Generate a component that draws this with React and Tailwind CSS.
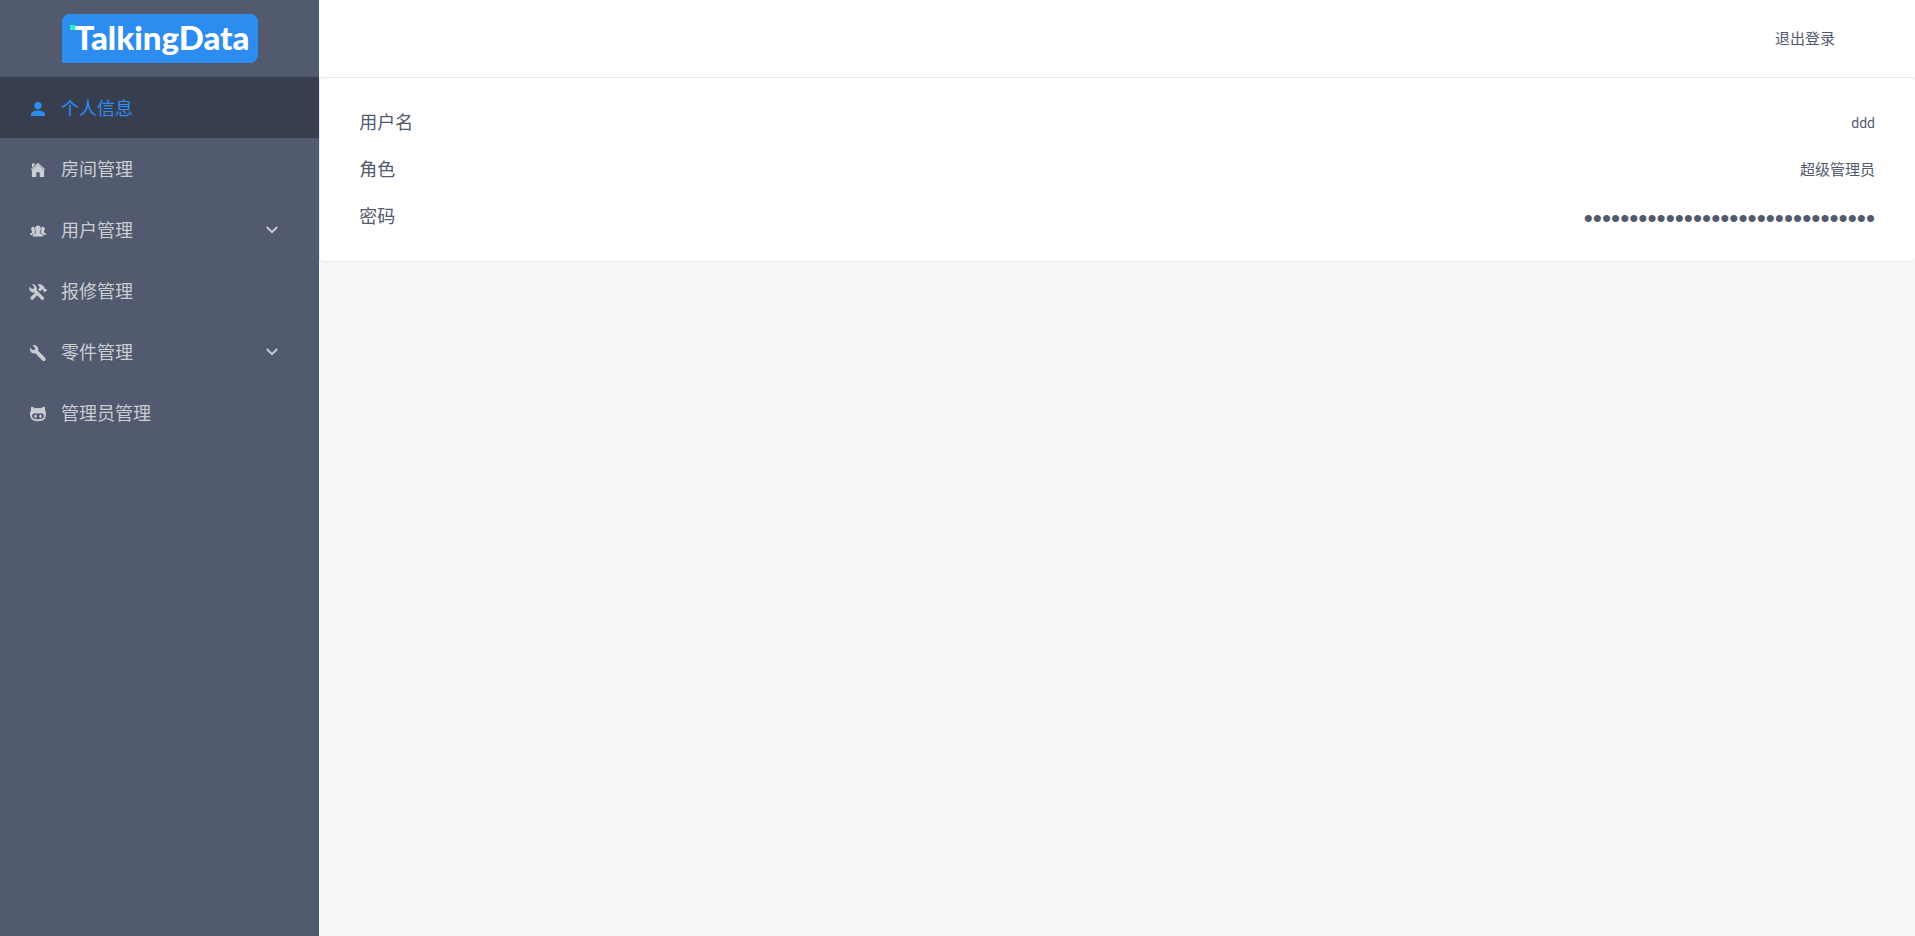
import React, { useState } from 'react';

function PersonIcon() {
  return (
    <svg viewBox="0 0 16 16" className="w-4 h-4 shrink-0" fill="currentColor" aria-hidden="true">
      <circle cx="8" cy="4.6" r="3.7" />
      <path d="M1 15v-1.600C1 10.800 4.600 9.400 8 9.400s7 1.400 7 4V15z" />
    </svg>
  );
}

function HomeIcon() {
  return (
    <svg viewBox="0 0 16 16" className="w-4 h-4 shrink-0" fill="currentColor" aria-hidden="true">
      <path d="M8 .8L.8 7.200l.7.8L8 2.400 14.500 8l.7-.8z" />
      <path d="M2 1.600h2.700v1.500L2 5.400z" />
      <path d="M8 2.800L1.900 8V15h4.400v-4.800h3.400V15h4.400V8z" />
    </svg>
  );
}

function PeopleIcon() {
  return (
    <svg viewBox="0 0 16 16" className="w-4 h-4 shrink-0" fill="currentColor" aria-hidden="true">
      <path d="M8 2.600c1.900 0 3 1.300 2.900 3.200-.1 1.500-.6 2.300-1 3.100-.2.900 0 1.400 1.200 1.800 1.400.4 2.300.9 2.300 2.900H2.600c0-2 .9-2.500 2.300-2.900 1.200-.4 1.400-.9 1.200-1.800-.4-.8-.9-1.600-1-3.100C5 3.900 6.100 2.600 8 2.600z" />
      <path d="M3.200 3.800c.7 0 1.200.2 1.500.6-.4 1.800 0 3.200.7 4.500.1.700-.1 1-.8 1.300-1 .4-1.900.8-2.400 1.900H0c0-1.600.5-2 1.500-2.300.7-.2.800-.7.600-1.300-.5-.7-.9-1.300-.9-2.400 0-1.400.7-2.300 2-2.300z" />
      <path d="M12.800 3.800c-.7 0-1.200.2-1.500.6.4 1.800 0 3.200-.7 4.500-.1.700.1 1 .8 1.300 1 .4 1.900.8 2.400 1.900H16c0-1.600-.5-2-1.500-2.300-.7-.2-.8-.7-.6-1.300.5-.7.900-1.300.9-2.400 0-1.400-.7-2.300-2-2.300z" />
    </svg>
  );
}

function ToolsIcon() {
  return (
    <svg viewBox="0 0 18 16" className="w-[18px] h-4 shrink-0" fill="currentColor" aria-hidden="true">
      <path d="M3 .4l2.300 2.300-.4 1.900-1.900.5L.5 2.800C-.1 5 .6 6.800 2 7.700c1.100.8 2.300.8 3.300.5l6.700 7.100c.8.800 1.800.800 2.500.1s.7-1.800 0-2.500L7.700 6.200c.4-1.500.2-3.100-.8-4.300C5.900.7 4.300 0 3 .4z" />
      <path d="M8.300.5c2.400-.5 4.600 0 6.300 1.700l.8.9v1.300l.8.7.8-.3 1.100 1.200-2.300 2.600-1.300-1.100.1-1-.8-.8-1-.1-1.700 1.900-2.100-2 1.700-1.800C10.300 2.400 9.600 1.300 8.300.5z" />
      <path d="M6.200 8.500l2.300 2.400-4.200 4.400c-.8.700-1.700.7-2.400 0-.6-.7-.6-1.500 0-2.200z" />
    </svg>
  );
}

function WrenchIcon() {
  return (
    <svg viewBox="0 0 16 16" className="w-4 h-4 shrink-0" fill="currentColor" aria-hidden="true">
      <path d="M2.500.2l2.700 2.700-.5 1.900-1.900.5L.2 2.700C-.4 4.700.2 6.300 1.400 7.400c1.100 1 2.500 1.300 3.900.9l6.800 7c.9.900 2.200.9 3 .1s.8-2.100-.1-3L8.100 5.700c.4-1.500.1-3-.9-4.100C6 .4 4.300-.3 2.500.2z" />
    </svg>
  );
}

function OctocatIcon() {
  return (
    <svg viewBox="0 0 16 16" className="w-4 h-4 shrink-0" fill="currentColor" aria-hidden="true">
      <path
        fillRule="evenodd"
        d="M1.300.8c1.500 0 2.900.7 3.800 1.400 1.900-.4 3.900-.4 5.800 0 .9-.7 2.300-1.400 3.800-1.400.5 1.200.5 2.500.2 3.500.8 1 1.100 2.200 1.100 3.500 0 5.200-2.800 7.400-8 7.400S0 13 0 7.800c0-1.300.3-2.500 1.100-3.500-.3-1-.3-2.300.2-3.500zM4.600 7.200C3.200 7.200 2.100 8.100 2.100 9.700c0 2.600 1.900 3.500 5.900 3.500s5.900-.9 5.900-3.500c0-1.600-1.100-2.500-2.500-2.500-1.200 0-2.200.3-3.400.3s-2.200-.3-3.400-.3z"
      />
      <ellipse cx="5.500" cy="10.200" rx="1.200" ry="1.700" />
      <ellipse cx="10.500" cy="10.200" rx="1.200" ry="1.700" />
    </svg>
  );
}

function ArrowDown() {
  return (
    <svg viewBox="0 0 12 8" className="w-3 h-2 shrink-0" fill="none" stroke="currentColor" strokeWidth="2" aria-hidden="true">
      <path d="M.8 1L6 6.200 11.200 1" />
    </svg>
  );
}

const menus = [
  { key: 'info', title: '个人信息', icon: PersonIcon },
  { key: 'room', title: '房间管理', icon: HomeIcon },
  { key: 'user', title: '用户管理', icon: PeopleIcon, hasChildren: true },
  { key: 'repair', title: '报修管理', icon: ToolsIcon },
  { key: 'part', title: '零件管理', icon: WrenchIcon, hasChildren: true },
  { key: 'admin', title: '管理员管理', icon: OctocatIcon },
];

function Sidebar() {
  const [active, setActive] = useState('info');

  return (
    <aside className="w-1/6 shrink-0 bg-[#515a6e]">
      <div className="h-[77px] pt-[14px] pl-[62px]">
        <div className="w-[196px] h-[49px] pl-1 pb-0.5 flex items-center justify-center rounded-lg rounded-bl-none bg-[#2d8cf0]">
          <span className="relative font-['Lato'] font-black text-[33px] leading-none text-white">
            <span className="absolute -left-[5px] top-1 w-[5px] h-[5px] bg-[#2af3b5]" />
            TalkingData
          </span>
        </div>
      </div>
      <nav>
        {menus.map(({ key, title, icon: Icon, hasChildren }) => (
          <button
            key={key}
            type="button"
            onClick={() => setActive(key)}
            className={
              active === key
                ? 'w-full h-[61px] pl-[30px] pr-[41px] flex items-center text-lg text-[#2d8cf0] bg-[#363e4f]'
                : 'w-full h-[61px] pl-[30px] pr-[41px] flex items-center text-lg text-[#cbcdd4]'
            }
          >
            <span className="w-4 mr-[15px] pt-[3px] flex justify-center">
              <Icon />
            </span>
            <span className="flex-1 text-left">{title}</span>
            {hasChildren && <ArrowDown />}
          </button>
        ))}
      </nav>
    </aside>
  );
}

function App() {
  const [password] = useState('e10adc3949ba59abbe56e057f20f883e');

  return (
    <div className="min-h-screen flex bg-[#f5f7f9] text-[#515a6e] font-['Open_Sans','Noto_Sans_CJK_SC',sans-serif]">
      <Sidebar />
      <div className="flex-1 min-w-0">
        <header className="h-[77px] pr-20 flex items-center justify-end bg-white">
          <button type="button" className="text-[15px]">退出登录</button>
        </header>
        <main className="pl-[39px] pr-10 pt-5 pb-[22px] bg-white border border-r-0 border-[#e8eaec] rounded">
          <div className="h-[47px] flex items-center justify-between">
            <span className="text-lg">用户名</span>
            <span className="pt-0.5 font-['Roboto',sans-serif] text-sm">ddd</span>
          </div>
          <div className="h-[47px] flex items-center justify-between">
            <span className="text-lg">角色</span>
            <span className="pt-0.5 text-[15px]">超级管理员</span>
          </div>
          <div className="h-[47px] flex items-center justify-between">
            <label htmlFor="password" className="text-lg">密码</label>
            <input
              id="password"
              type="password"
              value={password}
              readOnly
              className="w-80 pt-1.5 text-right text-[26px] leading-none font-['Liberation_Sans',sans-serif] outline-none"
            />
          </div>
        </main>
      </div>
    </div>
  );
}

export default App;
